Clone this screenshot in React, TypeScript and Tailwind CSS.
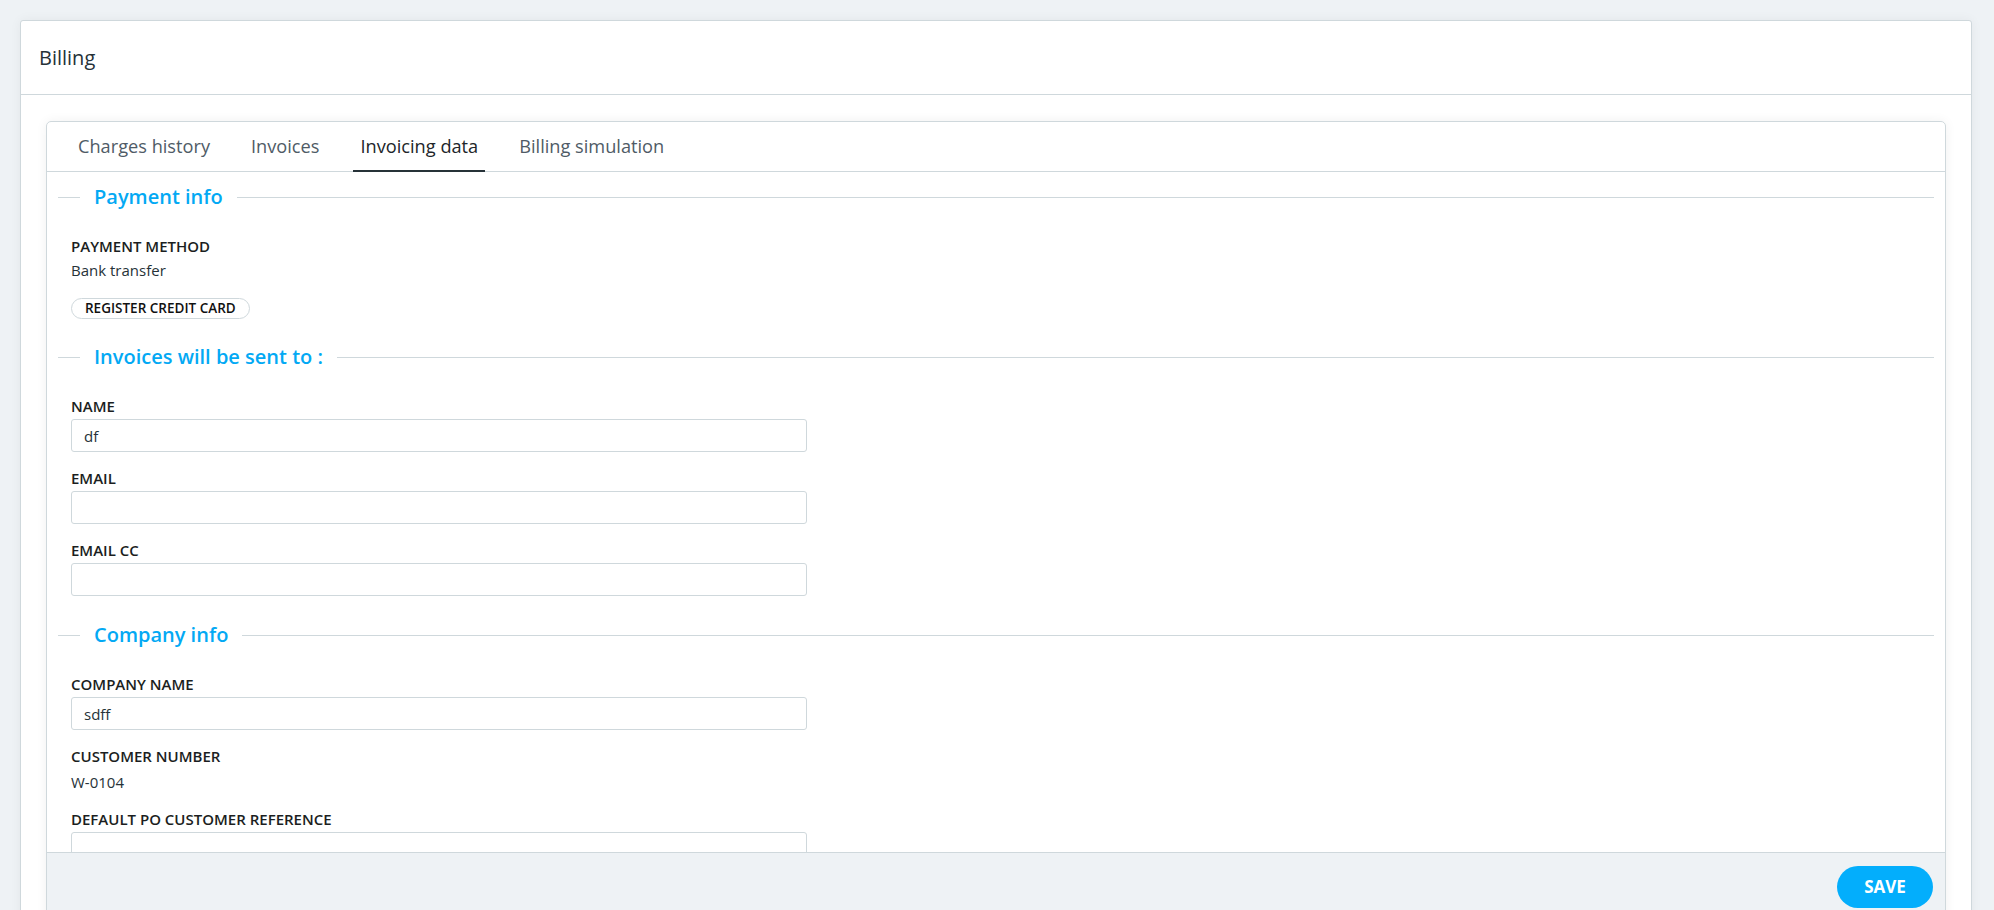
import React from "react";

const tabs = ["Charges history", "Invoices", "Invoicing data", "Billing simulation"];

function Legend({ title }: { title: string }) {
  return (
    <div className="flex items-center h-[24px]">
      <div className="w-[22px] h-px bg-[#cfd8dc]" />
      <span className="mx-[14px] text-[20px] leading-[24px] font-semibold text-[#03a9f4]">{title}</span>
      <div className="flex-1 h-px bg-[#cfd8dc]" />
    </div>
  );
}

function Label({ children }: { children: React.ReactNode }) {
  return (
    <div className="text-[15px] leading-[20px] font-semibold uppercase text-[#1b1e21]">{children}</div>
  );
}

function Field({ label, value = "", className = "" }: { label: string; value?: string; className?: string }) {
  return (
    <div className={className}>
      <Label>{label}</Label>
      <input
        readOnly
        value={value}
        className="mt-[3px] block w-[736px] h-[33px] rounded-[3px] border border-[#cfd8dc] px-[12px] text-[15px] text-[#263238] outline-none"
      />
    </div>
  );
}

export default function App() {
  return (
    <div
      className="h-[910px] overflow-hidden bg-[#eef2f5] pt-[20px] pl-[20px] pr-[22px]"
      style={{ fontFamily: "'Open Sans', 'Noto Sans', sans-serif" }}
    >
      <div className="bg-white border border-[#cfd8dc] rounded-[3px] shadow-[0_0_12px_rgba(0,0,0,0.05)]">
        <div className="h-[74px] flex items-center px-[18px] border-b border-[#cfd8dc]">
          <h1 className="text-[20px] text-[#263238]">Billing</h1>
        </div>
        <div className="px-[25px] pt-[26px]">
          <div className="border border-[#cfd8dc] rounded-[5px] shadow-[0_0_12px_rgba(0,0,0,0.06)] overflow-hidden">
            <div className="h-[50px] flex items-stretch px-[24px] gap-[27px] border-b border-[#cfd8dc]">
              {tabs.map((t) => (
                <button
                  key={t}
                  className={
                    t === "Invoicing data"
                      ? "px-[7px] text-[18.2px] text-[#212529] border-b-2 border-[#263238] mb-[-1px] pt-[1px]"
                      : "px-[7px] text-[18.2px] text-[#4f5b66]"
                  }
                >
                  {t}
                </button>
              ))}
            </div>

            <div className="h-[680px] overflow-hidden px-[11px] pt-[13px]">
              <Legend title="Payment info" />
              <div className="pl-[13px]">
                <div className="mt-[27px]">
                  <Label>Payment method</Label>
                  <div className="mt-[4px] text-[15px] leading-[20px] text-[#263238]">Bank transfer</div>
                  <button className="mt-[18px] h-[21px] px-[13px] rounded-full border border-[#cfd8dc] text-[13.5px] font-semibold text-[#111] leading-none">
                    REGISTER CREDIT CARD
                  </button>
                </div>
              </div>

              <div className="mt-[26px]">
                <Legend title="Invoices will be sent to :" />
              </div>
              <div className="pl-[13px]">
                <Field label="Name" value="df" className="mt-[27px]" />
                <Field label="Email" className="mt-[16px]" />
                <Field label="Email CC" className="mt-[16px]" />
              </div>

              <div className="mt-[27px]">
                <Legend title="Company info" />
              </div>
              <div className="pl-[13px]">
                <Field label="Company name" value="sdff" className="mt-[27px]" />
                <div className="mt-[16px]">
                  <Label>Customer number</Label>
                  <div className="mt-[6px] text-[15px] leading-[20px] text-[#263238]">W-0104</div>
                </div>
                <Field label="Default PO customer reference" className="mt-[17px]" />
              </div>
            </div>

            <div className="h-[80px] bg-[#eef2f5] border-t border-[#cfd8dc] flex justify-end items-start pt-[13px] pr-[12px]">
              <button className="w-[96px] h-[42px] rounded-full bg-[#03aefc] text-white text-[17px] font-bold">
                SAVE
              </button>
            </div>
          </div>
        </div>
      </div>
    </div>
  );
}
